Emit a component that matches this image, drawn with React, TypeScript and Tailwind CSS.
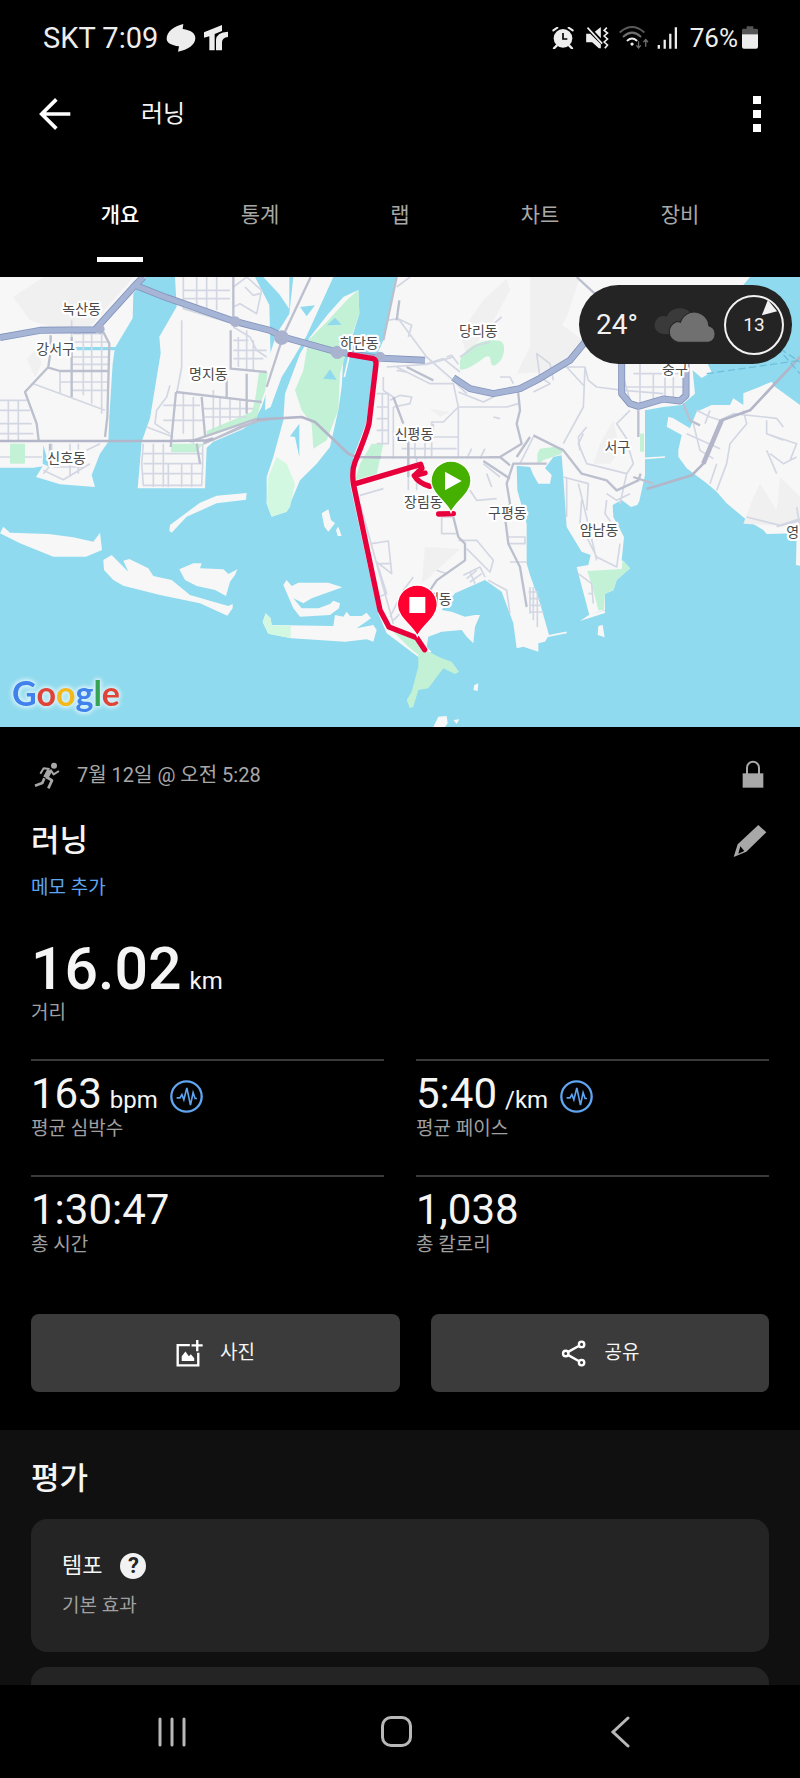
import type { ReactNode } from 'react';

const LAND = [
  // west bank
  'M0 0H435L400 50 398 124 345 212 338 260 328 420 325 494 300 530 275 594 285 630 180 622 108 600 128 568 100 572 0 572Z',
  // Myeongji
  'M525 0H765L808 84 812 250 805 330 785 390 765 428 730 456 640 494 620 512 615 634H413L425 494 450 424 482 229 478 179 530 89Z',
  'M790 0H868V96L838 52Z',
  'M880 0H1000L920 176 880 244 845 300 812 390 795 400 800 262 830 170 868 110Z',
  // Eulsukdo
  'M1075 39L1078 110 1050 200 1030 250 1025 330 1015 400 990 510 950 560 900 610 875 669 860 704 815 719 800 680 800 600 820 540 850 430 855 350 900 230 930 180 985 110 1030 60Z',
  // Saha / Seo-gu mainland
  'M1190 0H2400V0H2250L2230 24 2180 60 2120 254 2135 285 2105 303 2078 280 2085 350 2045 384 1990 390 1935 400 1935 594 1918 672 1912 684 1893 690 1865 669 1838 684 1840 720 1872 780 1865 850 1890 874 1850 909 1840 940 1815 950 1815 998 1768 1014 1730 870 1765 864 1772 834 1745 824 1700 750 1690 600 1685 535 1660 540 1635 574 1655 594 1650 620 1615 620 1600 594 1590 570 1550 566 1552 640 1580 740 1580 860 1590 894 1620 979 1647 1074 1635 1094 1615 1099 1615 1124 1570 1109 1550 1114 1540 1039 1505 944 1455 909 1365 949 1325 999 1355 1004 1395 1019 1425 1014 1440 1014 1425 1049 1420 1099 1400 1079 1385 1059 1325 1064 1285 1079 1280 1109 1295 1125 1255 1140 1160 1069 1135 1010 1065 690 1050 620 1060 540 1098 440 1118 300 1128 240 1150 190Z',
  // Yeongdo
  'M2005 419L2020 424 2070 454 2090 404 2135 384 2190 384 2200 364 2230 384 2230 349 2280 329 2315 314 2325 329 2400 384V866L2388 864 2390 769 2300 771 2290 759 2240 729 2180 679 2150 644 2120 619 2060 574 2035 539 2035 519 2045 474 2000 449Z',
  // sand bars
  'M0 769L10 749 30 767 145 771 220 781 280 794 300 767 306 819 258 839H160L60 799Z',
  'M310 849L335 834 385 884 370 851 388 846 445 874 460 897 515 909 570 954 640 974 685 987 698 981V994L682 1016 600 979 480 954 370 926 340 909 312 879Z',
  'M538 877L580 859H605L600 874 670 877 685 891 712 877 705 894 690 914 678 957 645 939 590 927 555 909Z',
  'M510 744L600 677 650 656 740 648 738 668 650 679 560 719 515 767 508 761Z',
  'M850 924L860 909 875 927 895 917H985L1027 931 935 964 910 979 880 964 905 994H955L990 981 1000 971 1020 979 1017 994 990 1014 900 1019 880 994Z',
  'M788 1035L797 1009 812 1024 815 1044 1000 1047 1005 1014 1030 1019 1040 1004 1050 1017H1085L1100 1007 1113 1024 1070 1054 1120 1044 1130 1059 1120 1094 1100 1087 1035 1094 875 1084 805 1070Z',
  'M965 709L985 697 993 729 1005 739 985 764 973 749ZM1008 759L1015 749 1025 777H1013Z',
  'M1315 1319L1340 1317 1343 1339 1335 1350H1300ZM1360 1329L1378 1327 1370 1341ZM1423 1224L1435 1219 1433 1242 1420 1239Z',
  'M1795 1047L1808 1044 1814 1081 1793 1074ZM1740 1032L1770 1012 1815 1000 1815 1008Z',
];

const SHADE = [
  'M130 0H400L270 150 150 150 90 130 40 60Z',
  'M80 245L110 215 125 260 105 300Z',
  'M1380 170L1450 70 1520 5 1530 40 1470 150 1400 235Z',
  'M1550 290L1640 110 1750 190 1680 280Z',
  'M1290 395L1350 405 1320 420Z',
  'M1275 810L1380 816 1265 920Z',
  'M1800 500L1840 430 1860 520 1830 560 1780 560Z',
  'M2230 740L2260 660 2280 620 2330 700 2340 600 2400 660V740L2310 745Z',
  'M1590 0H1740L1700 120 1640 220 1590 250Z',
];

const PARKS = [
  'M30 500H75V560H30Z',
  'M777 286H803L796 340 785 370 770 424 620 478V462L755 405 765 370Z',
  'M513 500H608L590 526H513Z',
  'M1075 39L1078 110 1040 220 1020 290 1015 400 980 490 940 515 935 440 905 400 885 340 910 280 925 190 985 130 1040 70Z',
  'M1380 255C1385 215 1450 180 1500 192C1525 200 1510 262 1480 266C1465 260 1480 230 1455 240C1430 260 1390 285 1380 276Z',
  'M1115 500H1150L1130 590 1065 610 1080 560Z',
  'M1612 530L1620 515 1660 510 1690 514 1685 530 1630 550 1612 564Z',
  'M1920 470H1932V524H1920Z',
  'M1762 882L1865 876 1868 848 1890 874 1850 909 1840 940 1815 950 1812 998 1795 1000 1780 940Z',
  'M1180 1064L1250 1079 1275 1119 1325 1144 1355 1154 1377 1184 1365 1191 1330 1174 1285 1234 1255 1239 1240 1289 1230 1294 1220 1269 1235 1244 1255 1169 1255 1134 1225 1109Z',
];

const SANDY_PARKS = [
  'M830 540L860 560 885 620 870 690 860 704 815 719 800 680 805 600Z',
  'M788 1035L797 1009 812 1024 815 1044 872 1047V1084L805 1070Z',
];

const INLETS = [
  'M130 504L140 540 148 570 128 560Z',
  'M225 210H348V220H225Z',
  'M980 145L1005 122 1025 143ZM970 305L990 277 1010 308ZM870 478L898 440V540L885 480Z',
  'M900 90L945 85 920 118ZM400 60L435 46 420 60Z',
];

const LANES = [
  'M0 370H80M0 400H90M0 440H95M0 470H100M25 370V490M55 370V490M0 540H30M75 540H125',
  'M180 280V350M215 130V190M250 160V355M275 160V380M305 165V410M215 240H325M215 262H325M180 315H325M215 340H325M100 320L315 400M220 170H310M215 195H330',
  'M155 500V560L130 590M165 545H260M160 570H250M210 500V600M235 500V590M130 580L190 608 270 560M260 520L300 500',
  'M545 130V270L530 350M550 0V95L700 140M590 0V90M620 0V95M650 0V100M550 40H690M550 65H690M700 30L740 0 785 40 770 110 720 80 700 90M735 30L760 55 780 50',
  'M700 190H745M700 220H800M700 245H790M715 180V270M740 160V280M760 190V280M700 150L750 180 770 220 800 240',
  'M510 325L500 360 470 400 465 440 510 470M550 350V470M580 360V500M490 385H600M490 430H610M640 340V460M660 360V450M610 395H760M615 420H740M690 360V430M720 370V420',
  'M430 500L425 560 430 625H605L608 560V500M430 560H610M430 590H610M460 500V630M490 500V630M505 560V630M545 560V630M575 560V630M425 530H610M440 450L520 480',
  'M1190 30L1230 0M1160 130L1195 125 1280 240 1360 310 1400 350M1195 125L1235 145 1225 180M1160 270L1280 262 1360 240M1275 262L1330 245 1380 285',
  'M1130 350H1165V500H1130M1130 390H1165M1130 425H1165M1130 460H1165M1147 350V500M1170 370L1200 355 1235 360 1230 380 1180 390',
  'M1150 300V340L1180 360M1190 270L1290 320H1360L1375 390V540M1375 390L1330 435H1295V540M1245 450V545M1275 450V545M1200 480H1375M1205 515H1370M1300 440V460',
  'M1470 150L1505 120M1380 240L1430 205 1470 195M1340 240L1355 235 1375 262M1375 345L1450 375 1480 360M1375 390H1520L1555 380M1480 420L1500 425',
  'M1400 545L1415 515M1440 545L1455 515M1190 280L1220 285M1500 300L1530 300 1540 320M1180 390V545M1225 470V640M1250 540V640M1080 655L1150 635M1450 560L1500 600M1410 640L1430 670 1490 665M1460 590L1475 630',
  'M1080 680L1180 1040M1115 800L1165 792 1175 890 1130 855 1160 950 1135 960M1140 860H1175M1325 720V770H1370M1325 720H1360',
  'M1375 790H1430L1480 850 1470 885 1400 815M1390 895L1440 870 1455 900M1400 905L1430 880M1410 915L1445 890M1410 885L1425 920M1525 780H1575V800H1525M1530 855H1580M1170 1020L1210 940 1240 900M1180 1030L1250 960 1300 945M1310 880L1340 890',
  'M1590 930V1010M1600 930V1030M1612 950V1050M1585 945H1615M1587 965H1620M1588 985H1625M1590 1005H1630M1465 910L1520 940 1530 1010',
  'M1600 345L1650 320 1620 300 1610 230 1650 260 1660 310M1690 270L1755 270 1765 310 1790 330 1870 340 1990 350M1755 270L1750 390 1690 500M1755 330L1700 270',
  'M1870 260V300L1890 370M1900 290H2050M1880 330H2060M1920 260V380M1960 290V370M1995 290V370M2020 290V360M1890 400L1850 440 1890 500M1740 520L1735 480 1760 450',
  'M1760 700L1765 620 1690 600M1860 680L1880 590 1900 560 1885 510M1820 650L1850 670 1890 650M1750 470L1735 500 1760 560 1880 590M1600 480L1560 560M1700 600V720',
  'M2090 400L2130 420 2160 430M2080 440L2100 520 2140 545M2060 470L2160 515M2130 400L2115 440M2150 560L2130 620M2160 430L2200 410 2330 424M2230 400L2240 440 2190 500 2180 560 2150 640M2300 430V470L2350 490M2330 424L2350 450M2300 470L2390 500 2370 550M2310 530L2350 560 2390 540M2330 590L2300 520',
  'M1745 669L1740 740 1790 840 1850 870 1860 800M1735 620L1750 680 1790 850M1820 669L1815 710 1850 760M1735 890L1775 920 1780 980M1765 950H1780M2240 720L2340 745 2400 725M2330 749L2400 731M2390 690L2400 750',
];

const STREETS = [
  'M310 165L328 200 322 420 315 480M152 175V220L145 270 75 345 110 440 116 490M145 272L180 282H325M215 180V360M150 500V560',
  'M700 0V130M692 160V275L800 285M680 290V365M528 345L785 375M528 345L512 510M605 360L615 475M740 290V410M570 494L770 425M610 500L770 432 810 426M635 490L720 450 800 424M590 500L600 560',
  'M932 0L850 175 800 330M1190 0L1150 190M1198 70L1190 130M1220 270L1300 310M1180 360L1210 440',
  'M1225 450V600M1145 541H1450L1500 540M1450 552L1530 605M1500 540L1530 565M1553 330L1560 400 1550 440 1565 500 1500 540M1640 560H1540L1520 620 1530 680 1515 720 1525 800 1560 870 1580 990',
  'M1360 720L1375 780 1395 800 1395 850 1310 910 1290 940',
  'M1730 0L1790 55M1600 475L1690 520 1745 590 1820 610 1850 640 1915 610 1922 590M1915 400V480M1900 600L1960 620',
  'M2050 380L2070 430 2100 445M1590 480L1550 540',
];

const HIGHWAYS = [
  'M0 182L120 160 285 158 405 25 430 0',
  'M405 25L500 62 700 132 810 160 850 180 1000 222 1130 243 1275 250',
  'M1360 302L1410 335 1480 350 1560 335 1620 304 1710 250 1755 195',
  'M1865 250V350L1890 380 1915 388 1990 366 2040 372 2058 355V260',
];

const ROUTE = [
  'M1050 233L1120 245Q1129 248 1128 262L1107 440Q1100 470 1065 555Q1055 580 1060 620L1140 999 1167 1050 1250 1082 1274 1118',
  'M1067 620L1262 562 1266 574 1243 596 1275 588M1243 596Q1255 618 1290 628',
  'M1316 711L1360 710',
];

const MAP_LABELS = [
  { text: '녹산동', x: 245, y: 112 },
  { text: '강서구', x: 167, y: 232 },
  { text: '명지동', x: 625, y: 306 },
  { text: '신호동', x: 200, y: 557 },
  { text: '하단동', x: 1078, y: 212 },
  { text: '당리동', x: 1435, y: 177 },
  { text: '신평동', x: 1242, y: 487 },
  { text: '장림동', x: 1270, y: 690 },
  { text: '구평동', x: 1522, y: 724 },
  { text: '다대동', x: 1297, y: 982 },
  { text: '서구', x: 1852, y: 524 },
  { text: '중구', x: 2025, y: 292 },
  { text: '암남동', x: 1797, y: 774 },
  { text: '영', x: 2378, y: 779 },
];

const TABS = ['개요', '통계', '랩', '차트', '장비'];

interface IStatProps {
  value: string;
  label: string;
  unit?: string;
  zoned?: boolean;
}

const STATS: IStatProps[] = [
  { value: '163', unit: 'bpm', label: '평균 심박수', zoned: true },
  { value: '5:40', unit: '/km', label: '평균 페이스', zoned: true },
  { value: '1:30:47', label: '총 시간' },
  { value: '1,038', label: '총 칼로리' },
];

function StatusBar() {
  return (
    <div className="flex h-[75px] items-center justify-between pr-[42px] pl-[43px] leading-8 text-[#ededed]">
      <div className="flex items-center gap-2">
        <span className="text-[29px]">SKT 7:09</span>
        <svg viewBox="0 0 90 84" className="h-7 w-[30px]" fill="currentColor">
          <path d="M52 0L50 15C74 18 88 28 88 42C88 62 66 78 36 83L39 67C16 64 2 56 2 44C2 24 24 6 52 0Z" />
        </svg>
        <svg viewBox="0 0 72 78" className="h-[26px] w-6" fill="currentColor">
          <path d="M0 22L54 0V18L32 27V76H16V34L0 38ZM36 76V44Q38 22 72 20V36Q54 38 54 52V76Z" />
        </svg>
      </div>
      <div className="flex items-center">
        <svg viewBox="0 0 66 66" className="mr-3 size-[22px]" fill="currentColor">
          <path d="M4 10L16 2M62 10L50 2" stroke="currentColor" strokeWidth="6" strokeLinecap="round" />
          <path d="M14 56L6 64M52 56L60 64" stroke="currentColor" strokeWidth="7" strokeLinecap="round" />
          <circle cx="33" cy="34" r="28" />
          <path d="M33 18V36H46" fill="none" stroke="#000" strokeWidth="5" />
        </svg>
        <svg viewBox="0 0 68 66" className="mr-[10px] h-[22px] w-[23px]" fill="currentColor">
          <path d="M0 20H12L44 52V64H38L18 46H0ZM26 14L44 0V34Z" />
          <path d="M4 2L48 50" stroke="currentColor" strokeWidth="5" />
          <path d="M62 2L54 10 64 18 54 27 64 36 54 45 64 54 56 64" fill="none" stroke="currentColor" strokeWidth="5" />
        </svg>
        <svg viewBox="0 0 92 70" className="mr-2 h-[23px] w-[30px]" fill="none" strokeWidth="6" strokeLinecap="round">
          <path d="M4 18Q40 -12 76 18" stroke="#5a5a5a" />
          <path d="M14 32Q40 8 66 32" stroke="#6e6e6e" />
          <path d="M26 44Q40 32 54 44" stroke="currentColor" />
          <circle cx="40" cy="55" r="5" fill="currentColor" />
          <path d="M60 48V66M54 60L60 67 66 60M82 62V42M76 48L82 41 88 48" stroke="#6e6e6e" strokeWidth="4" />
        </svg>
        <svg viewBox="0 0 64 66" className="mr-3 h-[22px] w-[21px]" fill="currentColor">
          <path d="M2 54H9V66H2ZM20 38H27V66H20ZM37 20H44V66H37ZM54 0H61V66H54Z" />
        </svg>
        <span className="text-[26px]">76%</span>
        <svg viewBox="0 0 48 68" className="ml-1 h-[23px] w-4">
          <path d="M14 0H34V8H44Q48 8 48 12V24H0V12Q0 8 4 8H14Z" fill="#555" />
          <path d="M0 24H48V62Q48 68 42 68H6Q0 68 0 62Z" fill="currentColor" />
        </svg>
      </div>
    </div>
  );
}

function AppBar() {
  return (
    <header className="flex h-[78px] items-center pr-[27px] pl-[31px]">
      <button aria-label="뒤로" className="flex w-12 justify-center">
        <svg viewBox="0 0 96 96" className="size-8" fill="none" stroke="#fff" strokeWidth="11">
          <path d="M52 4L8 48 52 92M8 48H94" />
        </svg>
      </button>
      <h1 className="ml-[62px] flex-1 text-[24px] leading-7">러닝</h1>
      <button aria-label="더보기" className="flex w-8 flex-col items-center gap-[6px]">
        <i className="size-2 bg-white" />
        <i className="size-2 bg-white" />
        <i className="size-2 bg-white" />
      </button>
    </header>
  );
}

function MapPin({ x, y, color, children }: { x: number; y: number; color: string; children: ReactNode }) {
  return (
    <g transform={`translate(${x} ${y})`}>
      <path
        d="M0 94C-12 64 -60 37 -60 0A60 60 0 0 1 60 0C60 37 12 64 0 94Z"
        fill={color}
        stroke="#fff"
        strokeWidth="4"
      />
      {children}
    </g>
  );
}

function RouteMap() {
  return (
    <svg viewBox="0 0 2400 1350" className="block w-full bg-[#8fdaee]" role="img" aria-label="경로 지도">
      <g fill="#f7f7f7">{LAND.map((d) => <path key={d} d={d} />)}</g>
      <g fill="#f0f0f0">{SHADE.map((d) => <path key={d} d={d} />)}</g>
      <g fill="#c3f1d5">{PARKS.map((d) => <path key={d} d={d} />)}</g>
      <g fill="#d3f8e2">{SANDY_PARKS.map((d) => <path key={d} d={d} />)}</g>
      <g fill="#8fdaee">{INLETS.map((d) => <path key={d} d={d} />)}</g>
      <g fill="none" strokeLinejoin="round">
        <g stroke="#d3d7e3" strokeWidth="5">{LANES.map((d) => <path key={d} d={d} />)}</g>
        <g stroke="#bcc0ce" strokeWidth="7">{STREETS.map((d) => <path key={d} d={d} />)}</g>
        <path
          d="M0 492H512L620 490 640 485M770 428L905 420 945 435 1045 530 1070 540 1145 541M1940 636L2075 595 2110 560 2165 430 2250 400 2400 240"
          stroke="#b3b5c8"
          strokeWidth="8"
        />
        <path d="M2165 430L2110 560" stroke="#b3b5c8" strokeWidth="14" />
        <path d="M2120 290L2400 250M2330 210L2400 290M2340 215L2400 255" stroke="#6fbfdb" strokeWidth="4" strokeDasharray="22 10" />
        <path d="M1935 544L1995 540M1640 1078L1700 1066M1048 235L1033 300" stroke="#f7f7f7" strokeWidth="5" />
        <g stroke="#8494bc" strokeWidth="21">{HIGHWAYS.map((d) => <path key={d} d={d} />)}</g>
        <g stroke="#a6b5d5" strokeWidth="16">{HIGHWAYS.map((d) => <path key={d} d={d} />)}</g>
      </g>
      <g fill="#a9b3cf">
        <circle cx="845" cy="182" r="22" />
        <circle cx="1012" cy="226" r="20" />
        <circle cx="1140" cy="240" r="16" />
        <circle cx="706" cy="134" r="16" />
        <circle cx="300" cy="156" r="14" />
      </g>
      <g
        fill="#4a4a4a"
        stroke="#fff"
        strokeWidth="13"
        strokeLinejoin="round"
        fontSize="42"
        textAnchor="middle"
        className="[paint-order:stroke]"
      >
        {MAP_LABELS.map(({ text, x, y }) => (
          <text key={text} x={x} y={y}>
            {text}
          </text>
        ))}
      </g>
      <g fill="none" stroke="#e8003c" strokeWidth="16" strokeLinecap="round" strokeLinejoin="round">
        {ROUTE.map((d) => <path key={d} d={d} />)}
      </g>
      <MapPin x={1353} y={612} color="#45b000">
        <path d="M-18 -28L32 0 -18 28Z" fill="#fff" />
      </MapPin>
      <MapPin x={1252} y={984} color="#ff0030">
        <path d="M-24 -24H24V24H-24Z" fill="#fff" />
      </MapPin>
    </svg>
  );
}

function WeatherPill() {
  return (
    <div className="absolute top-2 right-2 flex h-[79px] items-center rounded-full bg-[#242424] pr-2 pl-[17px] text-[#f2f2f2]">
      <span className="text-[28px] leading-8">24°</span>
      <svg viewBox="0 0 184 104" className="ml-4 h-9 w-16">
        <path d="M26 78A26 26 0 0 1 28 26Q32 26 36 28A42 42 0 0 1 112 28L60 78Z" fill="#3a3a3a" />
        <path
          d="M68 102A31 31 0 0 1 66 42Q70 42 76 44A42 42 0 0 1 158 54A25 25 0 0 1 158 102Z"
          fill="#707070"
          stroke="#242424"
          strokeWidth="3"
        />
      </svg>
      <div className="relative ml-[6px] flex size-[60px] items-center justify-center rounded-full border-2 border-[#f2f2f2]">
        <span className="text-[19px] leading-6">13</span>
        <svg viewBox="0 0 50 48" className="absolute top-[3px] right-1 h-4 w-[17px]" fill="#f2f2f2">
          <path d="M20 0L48 34 2 46Z" />
        </svg>
      </div>
    </div>
  );
}

function GoogleMark() {
  return (
    <div className="absolute bottom-[14px] left-3 font-['Lato'] text-[34px] leading-10 font-bold [filter:drop-shadow(0_0_1px_#d2f0f8)_drop-shadow(0_0_2px_#d2f0f8)_drop-shadow(0_0_2px_#d2f0f8)]">
      <span className="text-[#4081ec]">G</span>
      <span className="text-[#e04438]">o</span>
      <span className="text-[#f2b81c]">o</span>
      <span className="text-[#4081ec]">g</span>
      <span className="text-[#36a354]">l</span>
      <span className="text-[#e04438]">e</span>
    </div>
  );
}

function Stat({ value, unit, label, zoned }: IStatProps) {
  return (
    <div className="border-t-2 border-[#3a3a3a] pt-[10px] pb-[34px]">
      <div className="flex items-center">
        <p className="text-[42px] leading-[46px]">
          {value}
          {unit && <span className="ml-2 text-[24px] leading-none">{unit}</span>}
        </p>
        {zoned && (
          <svg viewBox="0 0 100 100" className="mt-1 ml-3 size-[33px]" fill="none" stroke="#5fa5f0">
            <circle cx="50" cy="50" r="46" strokeWidth="7" />
            <path d="M20 54H30L36 44 42 60 51 24 62 76 70 38 76 56H82" strokeWidth="5" />
          </svg>
        )}
      </div>
      <p className="text-[19px] leading-6 text-[#a0a0a0]">{label}</p>
    </div>
  );
}

function Summary() {
  const buttonClass =
    'flex h-[78px] items-center justify-center gap-[17px] rounded-lg bg-[#3b3b3b] text-[19px] leading-6';

  return (
    <section className="px-[31px] pt-8 pb-[38px]">
      <div className="flex h-8 items-center text-[#a8a8a8]">
        <svg viewBox="0 0 84 84" className="ml-[2px] size-7" fill="none" stroke="currentColor" strokeLinejoin="round">
          <circle cx="63" cy="14" r="9" fill="currentColor" stroke="none" />
          <path d="M50 28L38 50" strokeWidth="16" />
          <path d="M40 48L57 58 46 82M34 52L28 66 6 74" strokeWidth="8" />
          <path d="M52 26L62 40 78 30M50 24L32 22 22 38" strokeWidth="6" />
        </svg>
        <time className="ml-4 flex-1 text-[20px] leading-8">7월 12일 @ 오전 5:28</time>
        <svg viewBox="0 0 96 96" className="size-8">
          <path d="M30 46V26A18 18 0 0 1 66 26V46" fill="none" stroke="currentColor" strokeWidth="6" />
          <path d="M17 43H79V86H17Z" fill="currentColor" />
        </svg>
      </div>
      <div className="mt-[30px] flex h-10 items-center justify-between">
        <h2 className="text-[31px] leading-10 font-medium">러닝</h2>
        <button aria-label="이름 수정" className="text-[#a8a8a8]">
          <svg viewBox="0 0 108 108" className="size-9" fill="currentColor">
            <path d="M76 6L100 28 40 86 2 102 14 64ZM22 70L16 92 34 84Z" fillRule="evenodd" />
          </svg>
        </button>
      </div>
      <a href="#memo" className="mt-[15px] block w-fit text-[19px] leading-6 text-[#5fa5f0]">
        메모 추가
      </a>
      <p className="mt-[37px] text-[59px] leading-[64px] font-medium">
        16.02<span className="ml-2 text-[24px] leading-none font-normal">km</span>
      </p>
      <p className="text-[19px] leading-6 text-[#a0a0a0]">거리</p>
      <div className="mt-[34px] grid grid-cols-2 gap-x-8">
        {STATS.map((stat) => (
          <Stat key={stat.label} {...stat} />
        ))}
      </div>
      <div className="mt-[23px] grid grid-cols-[369fr_338fr] gap-[31px]">
        <button className={buttonClass}>
          <svg viewBox="0 0 80 80" className="size-[27px]" fill="none" stroke="#fff" strokeWidth="7">
            <path d="M41 15H5V75H66V38M46 16H79M63 0V33" />
            <path d="M17 62V48L28 34 38 48 44 42 54 54V62Z" fill="#fff" stroke="none" />
          </svg>
          사진
        </button>
        <button className={buttonClass}>
          <svg viewBox="0 0 80 80" className="size-[27px]" fill="none" stroke="#fff" strokeWidth="7">
            <path d="M20 36L54 17M20 44L54 63" />
            <circle cx="14" cy="40" r="8" />
            <circle cx="61" cy="13" r="8" />
            <circle cx="61" cy="67" r="8" />
          </svg>
          공유
        </button>
      </div>
    </section>
  );
}

function Evaluation() {
  return (
    <section className="flex h-[255px] flex-col overflow-hidden bg-[#101010] px-[31px] pt-[29px]">
      <h2 className="text-[31px] leading-10 font-medium">평가</h2>
      <div className="mt-5 shrink-0 rounded-[16px] bg-[#242424] px-[31px] pt-[31px] pb-[30px]">
        <div className="flex h-8 items-center gap-[18px]">
          <h3 className="text-[22px] leading-8">템포</h3>
          <button
            aria-label="템포 도움말"
            className="flex size-[26px] items-center justify-center rounded-full bg-[#f2f2f2] text-[22px] leading-6 font-bold text-[#242424]"
          >
            ?
          </button>
        </div>
        <p className="mt-3 pb-1 text-[19px] leading-6 text-[#a0a0a0]">기본 효과</p>
      </div>
      <div className="mt-[15px] h-[133px] shrink-0 rounded-[16px] bg-[#242424]" />
    </section>
  );
}

function SystemNav() {
  const buttonClass = 'flex flex-1 items-center justify-center';

  return (
    <nav className="flex h-[93px] pr-[68px] pl-[60px] text-[#b8b8b8]">
      <button aria-label="최근 앱" className={buttonClass}>
        <svg viewBox="0 0 30 30" className="size-[30px]" stroke="currentColor" strokeWidth="3" strokeLinecap="round">
          <path d="M3 2V28M15 2V28M27 2V28" />
        </svg>
      </button>
      <button aria-label="홈" className={buttonClass}>
        <i className="size-[31px] rounded-[10px] border-3 border-current" />
      </button>
      <button aria-label="뒤로 가기" className={buttonClass}>
        <svg viewBox="0 0 20 32" className="h-8 w-5" fill="none" stroke="currentColor" strokeWidth="3" strokeLinecap="round">
          <path d="M18 2L3 16 18 30" />
        </svg>
      </button>
    </nav>
  );
}

export default function App() {
  return (
    <div className="flex min-h-screen flex-col bg-black font-['Roboto','Noto_Sans_CJK_KR',sans-serif] text-[#f5f5f5]">
      <StatusBar />
      <AppBar />
      <div role="tablist" className="grid h-[124px] grid-cols-5 px-[50px] pb-[15px]">
        {TABS.map((tab, i) => (
          <button
            key={tab}
            role="tab"
            aria-selected={i === 0}
            className="group flex flex-col items-center justify-between pt-[49px] text-[21px] leading-[26px] text-[#a8a8a8] aria-selected:font-medium aria-selected:text-white"
          >
            {tab}
            <i className="h-[5px] w-[46px] group-aria-selected:bg-white" />
          </button>
        ))}
      </div>
      <main className="flex-1">
        <div className="relative overflow-hidden">
          <RouteMap />
          <WeatherPill />
          <GoogleMark />
        </div>
        <Summary />
        <Evaluation />
      </main>
      <SystemNav />
    </div>
  );
}
